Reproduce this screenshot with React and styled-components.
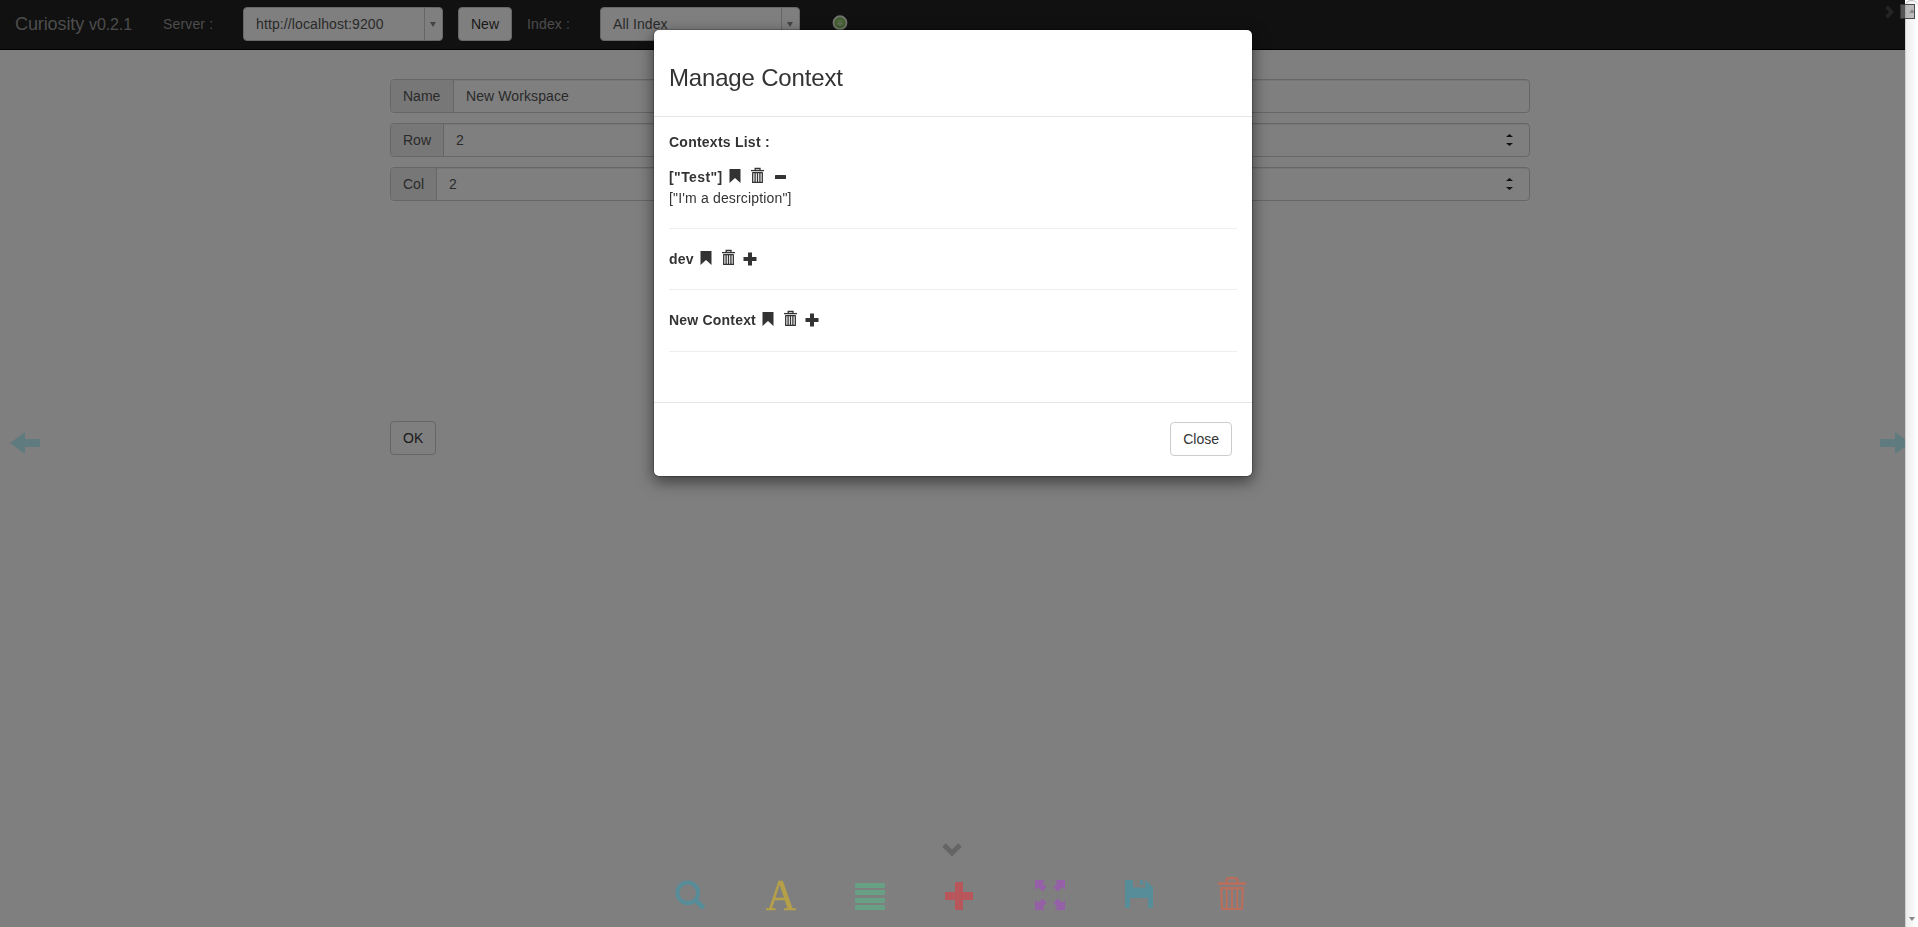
import React from "react";
import styled, { createGlobalStyle } from "styled-components";

const Global = createGlobalStyle`
  *, *::before, *::after { box-sizing: border-box; }
  body {
    margin: 0;
    overflow: hidden;
    background: #fff;
    color: #333;
    font: 14px/20px "Liberation Sans", Arial, sans-serif;
  }
`;

const Screen = styled.div`
  display: flex;
  width: 100vw;
  height: 100vh;
`;

const Page = styled.div`
  flex: 1;
  min-width: 0;
  display: flex;
  flex-direction: column;
  overflow: hidden;
`;

const Navbar = styled.header`
  display: flex;
  align-items: flex-start;
  flex: none;
  height: 50px;
  padding: 7px 10px 0 15px;
  background: #222;
  border-bottom: 1px solid #000;
  color: #999;
`;

const Brand = styled.div`
  width: 148px;
  font-size: 18px;
  letter-spacing: -0.1px;
  line-height: 34px;
  white-space: pre;
  small { font-size: 16px; }
`;

const NavLabel = styled.div`
  width: ${(p) => p.$width}px;
  line-height: 34px;
  letter-spacing: 0.15px;
  color: #999;
`;

const Select = styled.div`
  display: flex;
  width: 200px;
  height: 34px;
  margin-right: ${(p) => p.$gap || 0}px;
  border: 1px solid #ccc;
  border-radius: 4px;
  background: #fff;
  color: #555;
  line-height: 32px;
  letter-spacing: 0.11px;
`;

const SelectValue = styled.span`
  flex: 1;
  padding-left: 12px;
`;

const SelectArrow = styled.span`
  display: flex;
  align-items: center;
  justify-content: center;
  width: 18px;
  padding-right: 1px;
  border-left: 1px solid #ccc;
`;

const Button = styled.button`
  height: 34px;
  padding: 0 12px;
  border: 1px solid #ccc;
  border-radius: 4px;
  background: #fff;
  color: #333;
  font: inherit;
`;

const NavButton = styled(Button)`
  width: 54px;
  padding: 0;
  margin-right: 15px;
`;

const Status = styled.div`
  margin: 8px auto 0 0;
  line-height: 0;
`;

const NavNext = styled.div`
  margin-top: -2px;
  line-height: 0;
`;

const Main = styled.main`
  flex: 1;
  display: flex;
  align-items: flex-start;
  padding-top: 29px;
`;

const Form = styled.form`
  display: flex;
  flex-direction: column;
  align-items: flex-start;
  gap: 10px;
  width: 1140px;
`;

const Side = styled.div`
  position: relative;
  z-index: 2;
  width: 390px;
  flex: none;
  padding-top: 353px;
  padding-left: ${(p) => p.$left}px;
  line-height: 0;
`;

const SideRight = styled(Side)`
  width: 375px;
  overflow: hidden;
`;

const Group = styled.div`
  display: flex;
  width: 100%;
  height: 34px;
  border: 1px solid #ccc;
  border-radius: 4px;
  overflow: hidden;
  line-height: 32px;
`;

const Addon = styled.span`
  width: ${(p) => p.$width}px;
  padding-left: 12px;
  background: #eee;
  border-right: 1px solid #ccc;
  color: #555;
`;

const Field = styled.span`
  flex: 1;
  display: flex;
  justify-content: space-between;
  align-items: center;
  padding: 0 16px 0 12px;
  color: #555;
  letter-spacing: 0.1px;
  box-shadow: inset 0 1px 1px rgba(0, 0, 0, 0.075);
`;

const OkButton = styled(Button)`
  margin-top: 210px;
`;

const Dock = styled.footer`
  position: relative;
  z-index: 2;
  flex: none;
  display: flex;
  flex-direction: column;
  height: 85px;
  line-height: 0;
`;

const DockToggle = styled.div`
  padding-left: 942px;
  height: 33px;
`;

const Tools = styled.div`
  display: flex;
  padding-left: 675px;
`;

const Tool = styled.div`
  width: 90px;
  height: 36px;
  color: ${(p) => p.$color};
`;

const Letter = styled.span`
  display: block;
  width: 32px;
  padding: 2px 0 0 1px;
  font: 45px/36px "Liberation Serif", serif;
  transform: scaleX(0.92);
  transform-origin: left;
  -webkit-text-stroke: 0.7px currentColor;
`;

const Scrollbar = styled.aside`
  position: relative;
  z-index: 4;
  width: 13px;
  flex: none;
  display: flex;
  flex-direction: column;
  justify-content: space-between;
  align-items: center;
  padding: 8px 0 6px;
  border-left: 1px solid #cfcfcf;
  border-top: 1px solid #bbb;
  border-radius: 6px 6px 0 0;
  background: linear-gradient(90deg, #ececec, #fff);
  line-height: 0;
`;

const Corner = styled.div`
  position: fixed;
  z-index: 5;
  top: 4px;
  right: 3px;
  width: 15px;
  height: 15px;
  border: 1px solid rgba(40, 40, 40, 0.75);
  background: rgba(140, 140, 140, 0.55);
`;

const Backdrop = styled.div`
  position: fixed;
  inset: 0 13px 0 0;
  z-index: 1;
  background: rgba(0, 0, 0, 0.5);
`;

const ModalLayer = styled.div`
  position: fixed;
  inset: 0 12px 0 0;
  z-index: 3;
  display: flex;
  justify-content: center;
  align-items: flex-start;
  padding-top: 29px;
`;

const Modal = styled.section`
  width: 600px;
  border: 1px solid rgba(0, 0, 0, 0.2);
  border-radius: 6px;
  background: #fff;
  background-clip: padding-box;
  box-shadow: 0 5px 15px rgba(0, 0, 0, 0.5);
`;

const ModalHeader = styled.div`
  height: 87px;
  padding: 35px 15px 0;
  border-bottom: 1px solid #e5e5e5;
  h3 {
    margin: 0;
    font-size: 24px;
    line-height: 26px;
    font-weight: 500;
    letter-spacing: -0.17px;
  }
`;

const ModalBody = styled.div`
  height: 285px;
  padding: 15px;
`;

const ListTitle = styled.div`
  margin-bottom: 15px;
  font-weight: bold;
  letter-spacing: 0.24px;
`;

const Context = styled.div`
  padding-bottom: 20px;
  margin-bottom: 20px;
  border-bottom: 1px solid #eee;
  line-height: 20.4px;
`;

const ContextHead = styled.div`
  display: flex;
  height: 20.4px;
  font-weight: bold;
  letter-spacing: ${(p) => (p.$open ? 0.42 : 0.2)}px;
`;

const ContextText = styled.div`
  height: 20.4px;
  padding-top: 0.6px;
  letter-spacing: 0.16px;
`;

const ContextIcons = styled.span`
  display: flex;
  gap: 8px;
  margin-left: 5px;
  line-height: 0;
`;

const ModalFooter = styled.div`
  display: flex;
  justify-content: flex-end;
  padding: 19px 20px 20px;
  border-top: 1px solid #e5e5e5;
`;

const Caret = ({ w = 6, h = 5, up, color = "#888" }) => (
  <svg width={w} height={h} viewBox="0 0 6 5" preserveAspectRatio="none">
    <path d={up ? "M0 5L3 0L6 5Z" : "M0 0H6L3 5Z"} fill={color} />
  </svg>
);

const Spinner = () => (
  <svg width="7" height="12" viewBox="0 0 7 12" fill="#222">
    <path d="M0 3L3.5 0L7 3ZM0 9H7L3.5 12Z" />
  </svg>
);

const Bookmark = () => (
  <svg width="14" height="20" viewBox="0 0 14 20" fill="currentColor">
    <path d="M1.5 2H12.5V16L7 11L1.5 16Z" />
  </svg>
);

const SmallTrash = () => (
  <svg width="14" height="20" viewBox="0 0 14 20" fill="none" stroke="currentColor">
    <path d="M1 3.6H14" strokeWidth="1.3" />
    <path d="M5.2 3.5V1.5H10V3.5M2.7 6V15.4H12.3V6M2.2 5.6H12.8M5.1 6V15M7.5 6V15M9.9 6V15" strokeWidth="1.3" />
  </svg>
);

const Minus = () => (
  <svg width="14" height="20" viewBox="0 0 14 20" fill="currentColor">
    <rect x="3" y="8" width="11" height="4" rx=".6" />
  </svg>
);

const Plus = () => (
  <svg width="14" height="20" viewBox="0 0 14 20" fill="currentColor">
    <path d="M5 3.5H9V8H13.5V12H9V16.5H5V12H.5V8H5Z" />
  </svg>
);

const contexts = [
  { name: '["Test"]', text: '["I\'m a desrciption"]', open: true },
  { name: "dev" },
  { name: "New Context" },
];

const fields = [
  { label: "Name", value: "New Workspace", width: 63 },
  { label: "Row", value: "2", width: 53, number: true },
  { label: "Col", value: "2", width: 46, number: true },
];

export default function App() {
  return (
    <Screen>
      <Global />
      <Page>
        <Navbar>
          <Brand>Curiosity <small>v0.2.1</small></Brand>
          <NavLabel $width={80}>Server :</NavLabel>
          <Select $gap={15}>
            <SelectValue>http://localhost:9200</SelectValue>
            <SelectArrow><Caret /></SelectArrow>
          </Select>
          <NavButton>New</NavButton>
          <NavLabel $width={73}>Index :</NavLabel>
          <Select $gap={32}>
            <SelectValue>All Index</SelectValue>
            <SelectArrow><Caret /></SelectArrow>
          </Select>
          <Status>
            <svg width="16" height="16" viewBox="0 0 16 16">
              <circle cx="8" cy="7.7" r="6.4" fill="#7fbf50" stroke="#dde6d4" strokeWidth="2" />
              <circle cx="8" cy="7.7" r="4.2" fill="#a0cc80" stroke="#7cb550" />
              <path d="M5.8 8.8H10.2" stroke="#e0f0d4" />
            </svg>
          </Status>
          <NavNext>
            <svg width="10" height="14" viewBox="0 0 10 14" fill="none" stroke="#484848" strokeWidth="3.6">
              <path d="M1.5 1.8L6.5 7L1.5 12.2" />
            </svg>
          </NavNext>
        </Navbar>
        <Main>
          <Side $left={10}>
            <svg width="30" height="22" viewBox="0 0 30 22" fill="#5f7b80">
              <path d="M0 11L15 0V7H30V15H15V22Z" />
            </svg>
          </Side>
          <Form>
            {fields.map((f) => (
              <Group key={f.label}>
                <Addon $width={f.width}>{f.label}</Addon>
                <Field>{f.value}{f.number && <Spinner />}</Field>
              </Group>
            ))}
            <OkButton type="button">OK</OkButton>
          </Form>
          <SideRight $left={350}>
            <svg width="30" height="22" viewBox="0 0 30 22" fill="#5f7b80">
              <path d="M30 11L15 0V7H0V15H15V22Z" />
            </svg>
          </SideRight>
        </Main>
        <Dock>
          <DockToggle>
            <svg width="20" height="15" viewBox="0 0 20 15" fill="none" stroke="#656565" strokeWidth="5">
              <path d="M2 3L10 11L18 3" />
            </svg>
          </DockToggle>
          <Tools>
            <Tool $color="#568d99">
              <svg width="31" height="36" viewBox="0 0 31 36" fill="none" stroke="currentColor">
                <circle cx="12.8" cy="17.8" r="10.3" strokeWidth="4" />
                <path d="M20 24.5L28.5 33" strokeWidth="5" />
              </svg>
            </Tool>
            <Tool $color="#b5a04a"><Letter>A</Letter></Tool>
            <Tool $color="#67a085">
              <svg width="30" height="36" viewBox="0 0 30 36" fill="currentColor">
                {[8, 15, 23, 30].map((y) => <rect key={y} y={y} width="30" height="5" rx=".8" />)}
              </svg>
            </Tool>
            <Tool $color="#b7575c">
              <svg width="30" height="36" viewBox="0 0 30 36" fill="currentColor">
                <path d="M10 7H18V17H28V25H18V35H10V25H0V17H10Z" />
              </svg>
            </Tool>
            <Tool $color="#9560a8">
              <svg width="30" height="36" viewBox="0 0 30 36" fill="currentColor">
                <path d="M0 5H10L7.5 7.7L11.5 12L7.5 16.5L3 12.2L0 15ZM30 5H20L22.5 7.7L18.5 12L22.5 16.5L27 12.2L30 15ZM0 35H10L7.5 32.3L11.5 28L7.5 23.5L3 27.8L0 25ZM30 35H20L22.5 32.3L18.5 28L22.5 23.5L27 27.8L30 25Z" />
              </svg>
            </Tool>
            <Tool $color="#568d99">
              <svg width="30" height="36" viewBox="0 0 30 36" fill="currentColor">
                <path d="M0 5H8V12.5H20V5L28 12V33H23V23H5V33H0ZM15 5H18V10H15Z" />
              </svg>
            </Tool>
            <Tool $color="#ba6e5c">
              <svg width="32" height="36" viewBox="0 0 32 36" fill="none" stroke="currentColor">
                <path d="M3 8.5H31" strokeWidth="2.6" />
                <path d="M11.5 8V4.8L13 3.2H21L22.5 4.8V8" strokeWidth="2.2" />
                <path d="M6.2 13.2H27.8L27 33L26 34H8L7 33Z" strokeWidth="2.2" />
                <path d="M11.8 14V33M17 14V33M22.2 14V33" strokeWidth="2" />
              </svg>
            </Tool>
          </Tools>
        </Dock>
      </Page>
      <Scrollbar>
        <Caret up h={4} />
        <Caret h={4} />
      </Scrollbar>
      <Corner />
      <Backdrop />
      <ModalLayer>
        <Modal>
          <ModalHeader><h3>Manage Context</h3></ModalHeader>
          <ModalBody>
            <ListTitle>Contexts List :</ListTitle>
            {contexts.map((c) => (
              <Context key={c.name}>
                <ContextHead $open={c.open}>
                  {c.name}
                  <ContextIcons>
                    <Bookmark />
                    <SmallTrash />
                    {c.open ? <Minus /> : <Plus />}
                  </ContextIcons>
                </ContextHead>
                {c.text && <ContextText>{c.text}</ContextText>}
              </Context>
            ))}
          </ModalBody>
          <ModalFooter><Button>Close</Button></ModalFooter>
        </Modal>
      </ModalLayer>
    </Screen>
  );
}
